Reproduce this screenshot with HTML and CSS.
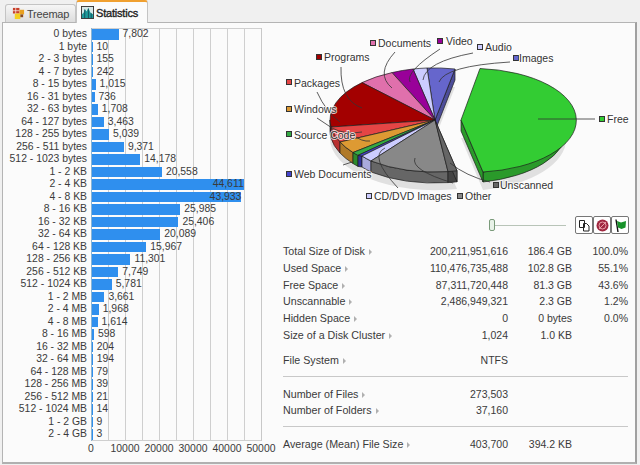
FILE: index.html
```html
<!DOCTYPE html>
<html lang="en">
<head>
    <meta charset="UTF-8">
    <title>Disk Statistics</title>
    <link rel="stylesheet" href="styles.css">
</head>
<body>
    <!-- Tabs -->
    <div class="tabs">
        <div class="tab">
            <svg class="tab-icon" viewBox="0 0 14 14">
                <rect x="1" y="1" width="7" height="6" fill="#c8402a"/>
                <rect x="8" y="3" width="5" height="5" fill="#e8a020"/>
                <rect x="3" y="7" width="6" height="6" fill="#f4d020"/>
                <rect x="9" y="8" width="3" height="3" fill="#8a4a20"/>
                <path d="M1 4h7M4 1v6" stroke="#fff" stroke-width="0.7"/>
            </svg>
            Treemap
        </div>
        <div class="tab tab-active">
            <svg class="tab-icon" viewBox="0 0 14 14">
                <rect x="0.5" y="0.5" width="13" height="13" fill="#d8e8e8" stroke="#333"/>
                <path d="M1 13V9l2-2 1-4 2 3 2-4 2 5 3 2v4z" fill="#1f9a9a"/>
                <path d="M4 13V4M8 13V3M11 13V8" stroke="#134" stroke-width="0.7"/>
            </svg>
            Statistics
        </div>
    </div>

    <div class="panel">
        <!-- File size histogram -->
        <div class="hist">
            <div class="hist-rows">
                <div class="hist-row"><span class="hist-label">0 bytes</span><div class="hist-track"><div class="hist-bar" style="width:26.5px"></div><span class="hist-value">7,802</span></div></div>
                <div class="hist-row"><span class="hist-label">1 byte</span><div class="hist-track"><div class="hist-bar" style="width:0.5px"></div><span class="hist-value">10</span></div></div>
                <div class="hist-row"><span class="hist-label">2 - 3 bytes</span><div class="hist-track"><div class="hist-bar" style="width:0.5px"></div><span class="hist-value">155</span></div></div>
                <div class="hist-row"><span class="hist-label">4 - 7 bytes</span><div class="hist-track"><div class="hist-bar" style="width:0.8px"></div><span class="hist-value">242</span></div></div>
                <div class="hist-row"><span class="hist-label">8 - 15 bytes</span><div class="hist-track"><div class="hist-bar" style="width:3.5px"></div><span class="hist-value">1,015</span></div></div>
                <div class="hist-row"><span class="hist-label">16 - 31 bytes</span><div class="hist-track"><div class="hist-bar" style="width:2.5px"></div><span class="hist-value">736</span></div></div>
                <div class="hist-row"><span class="hist-label">32 - 63 bytes</span><div class="hist-track"><div class="hist-bar" style="width:5.8px"></div><span class="hist-value">1,708</span></div></div>
                <div class="hist-row"><span class="hist-label">64 - 127 bytes</span><div class="hist-track"><div class="hist-bar" style="width:11.8px"></div><span class="hist-value">3,463</span></div></div>
                <div class="hist-row"><span class="hist-label">128 - 255 bytes</span><div class="hist-track"><div class="hist-bar" style="width:17.1px"></div><span class="hist-value">5,039</span></div></div>
                <div class="hist-row"><span class="hist-label">256 - 511 bytes</span><div class="hist-track"><div class="hist-bar" style="width:31.9px"></div><span class="hist-value">9,371</span></div></div>
                <div class="hist-row"><span class="hist-label">512 - 1023 bytes</span><div class="hist-track"><div class="hist-bar" style="width:48.2px"></div><span class="hist-value">14,178</span></div></div>
                <div class="hist-row"><span class="hist-label">1 - 2 KB</span><div class="hist-track"><div class="hist-bar" style="width:69.9px"></div><span class="hist-value">20,558</span></div></div>
                <div class="hist-row hist-row-full"><span class="hist-label">2 - 4 KB</span><div class="hist-track"><div class="hist-bar" style="width:151.7px"><span class="hist-value">44,611</span></div></div></div>
                <div class="hist-row hist-row-full"><span class="hist-label">4 - 8 KB</span><div class="hist-track"><div class="hist-bar" style="width:149.4px"><span class="hist-value">43,933</span></div></div></div>
                <div class="hist-row"><span class="hist-label">8 - 16 KB</span><div class="hist-track"><div class="hist-bar" style="width:88.3px"></div><span class="hist-value">25,985</span></div></div>
                <div class="hist-row"><span class="hist-label">16 - 32 KB</span><div class="hist-track"><div class="hist-bar" style="width:86.4px"></div><span class="hist-value">25,406</span></div></div>
                <div class="hist-row"><span class="hist-label">32 - 64 KB</span><div class="hist-track"><div class="hist-bar" style="width:68.3px"></div><span class="hist-value">20,089</span></div></div>
                <div class="hist-row"><span class="hist-label">64 - 128 KB</span><div class="hist-track"><div class="hist-bar" style="width:54.3px"></div><span class="hist-value">15,967</span></div></div>
                <div class="hist-row"><span class="hist-label">128 - 256 KB</span><div class="hist-track"><div class="hist-bar" style="width:38.4px"></div><span class="hist-value">11,301</span></div></div>
                <div class="hist-row"><span class="hist-label">256 - 512 KB</span><div class="hist-track"><div class="hist-bar" style="width:26.3px"></div><span class="hist-value">7,749</span></div></div>
                <div class="hist-row"><span class="hist-label">512 - 1024 KB</span><div class="hist-track"><div class="hist-bar" style="width:19.7px"></div><span class="hist-value">5,781</span></div></div>
                <div class="hist-row"><span class="hist-label">1 - 2 MB</span><div class="hist-track"><div class="hist-bar" style="width:12.4px"></div><span class="hist-value">3,661</span></div></div>
                <div class="hist-row"><span class="hist-label">2 - 4 MB</span><div class="hist-track"><div class="hist-bar" style="width:6.7px"></div><span class="hist-value">1,968</span></div></div>
                <div class="hist-row"><span class="hist-label">4 - 8 MB</span><div class="hist-track"><div class="hist-bar" style="width:5.5px"></div><span class="hist-value">1,614</span></div></div>
                <div class="hist-row"><span class="hist-label">8 - 16 MB</span><div class="hist-track"><div class="hist-bar" style="width:2px"></div><span class="hist-value">598</span></div></div>
                <div class="hist-row"><span class="hist-label">16 - 32 MB</span><div class="hist-track"><div class="hist-bar" style="width:0.7px"></div><span class="hist-value">204</span></div></div>
                <div class="hist-row"><span class="hist-label">32 - 64 MB</span><div class="hist-track"><div class="hist-bar" style="width:0.7px"></div><span class="hist-value">194</span></div></div>
                <div class="hist-row"><span class="hist-label">64 - 128 MB</span><div class="hist-track"><div class="hist-bar" style="width:0.5px"></div><span class="hist-value">79</span></div></div>
                <div class="hist-row"><span class="hist-label">128 - 256 MB</span><div class="hist-track"><div class="hist-bar" style="width:0.5px"></div><span class="hist-value">39</span></div></div>
                <div class="hist-row"><span class="hist-label">256 - 512 MB</span><div class="hist-track"><div class="hist-bar" style="width:0.5px"></div><span class="hist-value">21</span></div></div>
                <div class="hist-row"><span class="hist-label">512 - 1024 MB</span><div class="hist-track"><div class="hist-bar" style="width:0.5px"></div><span class="hist-value">14</span></div></div>
                <div class="hist-row"><span class="hist-label">1 - 2 GB</span><div class="hist-track"><div class="hist-bar" style="width:0.5px"></div><span class="hist-value">9</span></div></div>
                <div class="hist-row"><span class="hist-label">2 - 4 GB</span><div class="hist-track"><div class="hist-bar" style="width:0.5px"></div><span class="hist-value">3</span></div></div>
            </div>
            <div class="hist-axis">
                <span>0</span><span>10000</span><span>20000</span><span>30000</span><span>40000</span><span>50000</span>
            </div>
        </div>

        <div class="side">
            <!-- Pie chart: coordinates are page pixels, shifted by the viewBox -->
            <svg class="pie" viewBox="280 24 355 186">
                <g class="pie-shadow">
                    <path d="M435 138L330 138A105 52 0 0 0 457 189Z"/>
                    <path d="M435 138L427 86 455 87Z"/>
                    <path d="M461 138L566 138A105 52 0 0 1 483 190Z"/>
                </g>

                <!-- Side faces -->
                <g class="pie-edge">
                    <path fill="#7a0000" d="M330 120A105 52 0 0 0 331 127v11A105 52 0 0 1 330 131Z"/>
                    <path fill="#b83030" d="M331 127A105 52 0 0 0 340 142v11A105 52 0 0 1 331 138Z"/>
                    <path fill="#b07a28" d="M340 142A105 52 0 0 0 353 152.5v11A105 52 0 0 1 340 153Z"/>
                    <path fill="#2c8a2c" d="M353 152.5A105 52 0 0 0 358 155.4v11A105 52 0 0 1 353 163.5Z"/>
                    <path fill="#33339a" d="M358 155.4A105 52 0 0 0 362 156v11A105 52 0 0 1 358 166.4Z"/>
                    <path fill="#aaaadd" d="M362 156A105 52 0 0 0 371 161v11A105 52 0 0 1 362 167Z"/>
                    <path fill="#666" d="M371 161A105 52 0 0 0 448 171.6v11A105 52 0 0 1 371 172Z"/>
                    <path fill="#444" d="M448 171.6A105 52 0 0 0 457 170.8v11A105 52 0 0 1 448 182.6Z"/>
                    <path fill="#4d4d99" d="M435 120L455 69v11L435 131Z"/>
                    <path fill="#555" d="M435 120L457 170.8v11L435 131Z"/>
                </g>

                <!-- Top faces, anticlockwise from Images -->
                <g class="pie-edge">
                    <path fill="#6666cc" d="M435 120L455 69A105 52 0 0 0 427 68Z"/>
                    <path fill="#ccccff" d="M435 120L427 68A105 52 0 0 0 413 69Z"/>
                    <path fill="#990099" d="M435 120L413 69A105 52 0 0 0 392 72.6Z"/>
                    <path fill="#e070ac" d="M435 120L392 72.6A105 52 0 0 0 362 82.6Z"/>
                    <path fill="#a30000" d="M435 120L362 82.6A105 52 0 0 0 331 127Z"/>
                    <path fill="#e54545" d="M435 120L331 127A105 52 0 0 0 340 142Z"/>
                    <path fill="#dd9a33" d="M435 120L340 142A105 52 0 0 0 353 152.5Z"/>
                    <path fill="#33aa44" d="M435 120L353 152.5A105 52 0 0 0 358 155.4Z"/>
                    <path fill="#4444cc" d="M435 120L358 155.4A105 52 0 0 0 362 156Z"/>
                    <path fill="#ccccff" d="M435 120L362 156A105 52 0 0 0 371 161Z"/>
                    <path fill="#888" d="M435 120L371 161A105 52 0 0 0 448 171.6Z"/>
                    <path fill="#666" d="M435 120L448 171.6A105 52 0 0 0 457 170.8Z"/>
                </g>

                <!-- Free slice is pulled out to the right -->
                <g class="pie-edge">
                    <path fill="#2a9a2a" d="M566 120A105 52 0 0 1 483 172v10A105 52 0 0 0 566 130Z"/>
                    <path fill="#2a9a2a" d="M461 120L483 172v10L461 131Z"/>
                    <path fill="#33cc33" d="M461 120L480 68.5A105 52 0 0 1 483 172Z"/>
                </g>

                <!-- Leader lines -->
                <g class="pie-leader">
                    <path d="M538 119H595"/>
                    <path d="M450 163Q466 176 490 182"/>
                    <path d="M415 158Q410 170 453 183"/>
                    <path d="M385 148Q368 156 398 188"/>
                    <path d="M343 165L352 162"/>
                    <path d="M353 135Q362 142 370 141"/>
                    <path d="M317 118L332 128Q345 135 362 132"/>
                    <path d="M317 92Q326 112 340 122"/>
                    <path d="M341 67Q340 100 362 108"/>
                    <path d="M395 52Q375 74 392 88"/>
                    <path d="M440 49Q405 72 410 82"/>
                    <path d="M473 53Q425 62 423 80"/>
                    <path d="M510 62Q445 66 439 82"/>
                </g>

                <!-- Legend -->
                <g class="pie-key">
                    <rect x="370.5" y="40.5" width="5" height="5" fill="#e070ac"/>
                    <rect x="437.5" y="38.5" width="5" height="5" fill="#990099"/>
                    <rect x="477.5" y="44.5" width="5" height="5" fill="#ccccff"/>
                    <rect x="513.5" y="55.5" width="5" height="5" fill="#6666cc"/>
                    <rect x="316.5" y="54.5" width="5" height="5" fill="#a30000"/>
                    <rect x="286.5" y="79.5" width="5" height="5" fill="#e54545"/>
                    <rect x="286.5" y="106.5" width="5" height="5" fill="#dd9a33"/>
                    <rect x="286.5" y="131.5" width="5" height="5" fill="#33aa44"/>
                    <rect x="286.5" y="171.5" width="5" height="5" fill="#4444cc"/>
                    <rect x="366.5" y="193.5" width="5" height="5" fill="#ccccff"/>
                    <rect x="457.5" y="193.5" width="5" height="5" fill="#888"/>
                    <rect x="493.5" y="182.5" width="5" height="5" fill="#666"/>
                    <rect x="599.5" y="116.5" width="5" height="5" fill="#33cc33"/>
                </g>
                <g class="pie-text">
                    <text x="378" y="47">Documents</text>
                    <text x="446" y="45">Video</text>
                    <text x="485" y="51">Audio</text>
                    <text x="519" y="62">Images</text>
                    <text x="324" y="61">Programs</text>
                    <text x="294" y="87">Packages</text>
                    <text x="294" y="113">Windows</text>
                    <text x="294" y="139">Source Code</text>
                    <text x="294" y="178">Web Documents</text>
                    <text x="374" y="200">CD/DVD Images</text>
                    <text x="465" y="200">Other</text>
                    <text x="500" y="189">Unscanned</text>
                    <text x="607" y="123">Free</text>
                </g>
            </svg>

            <!-- Zoom slider and buttons -->
            <div class="controls">
                <div class="slider"><span class="slider-knob"></span></div>
                <div class="tool-btns">
                    <button class="tool-btn">
                        <svg viewBox="0 0 15 15"><path d="M2.500 2.500h5v7h-5zM6.500 5.500h3l2.500 2.500v5h-5.500z" fill="#fff" stroke="#222"/></svg>
                    </button>
                    <button class="tool-btn">
                        <svg viewBox="0 0 15 15"><circle cx="7.500" cy="7.500" r="6" fill="#a02840"/><circle cx="7.500" cy="7.500" r="3.500" fill="none" stroke="#e8a0a8"/><path d="M4 11L11 4" stroke="#e8a0a8"/></svg>
                    </button>
                    <button class="tool-btn">
                        <svg viewBox="0 0 15 15"><path d="M3 1.500L5 14" stroke="#111" stroke-width="1.400"/><path d="M4 3l4 1.500 5-1.500-.5 6.500-4 1.500-3.500-1.500z" fill="#18922a"/></svg>
                    </button>
                </div>
            </div>

            <!-- Disk numbers -->
            <div class="stat-group">
                <div class="stat-row"><span class="stat-label">Total Size of Disk</span><span class="stat-num">200,211,951,616</span><span class="stat-num">186.4 GB</span><span class="stat-num">100.0%</span></div>
                <div class="stat-row"><span class="stat-label">Used Space</span><span class="stat-num">110,476,735,488</span><span class="stat-num">102.8 GB</span><span class="stat-num">55.1%</span></div>
                <div class="stat-row"><span class="stat-label">Free Space</span><span class="stat-num">87,311,720,448</span><span class="stat-num">81.3 GB</span><span class="stat-num">43.6%</span></div>
                <div class="stat-row"><span class="stat-label">Unscannable</span><span class="stat-num">2,486,949,321</span><span class="stat-num">2.3 GB</span><span class="stat-num">1.2%</span></div>
                <div class="stat-row"><span class="stat-label">Hidden Space</span><span class="stat-num">0</span><span class="stat-num">0 bytes</span><span class="stat-num">0.0%</span></div>
                <div class="stat-row"><span class="stat-label">Size of a Disk Cluster</span><span class="stat-num">1,024</span><span class="stat-num">1.0 KB</span></div>
                <div class="stat-row stat-row-gap"><span class="stat-label">File System</span><span class="stat-num">NTFS</span></div>
            </div>
            <div class="stat-group">
                <div class="stat-row"><span class="stat-label">Number of Files</span><span class="stat-num">273,503</span></div>
                <div class="stat-row"><span class="stat-label">Number of Folders</span><span class="stat-num">37,160</span></div>
            </div>
            <div class="stat-group">
                <div class="stat-row"><span class="stat-label">Average (Mean) File Size</span><span class="stat-num">403,700</span><span class="stat-num">394.2 KB</span></div>
            </div>
        </div>
    </div>
</body>
</html>
```

FILE: styles.css
```css
* {
    box-sizing: border-box;
}

html, body {
    height: 100%;
    overflow: hidden;
}

body {
    margin: 0;
    background: #f0f0f0;
    color: #3a3a3a;
    font-family: "Liberation Sans", Arial, sans-serif;
    font-size: 10.5px;
}

/* Tabs */
.tabs {
    display: flex;
    height: 22px;
    padding-left: 5px;
    align-items: flex-end;
}

.tab {
    display: flex;
    align-items: center;
    gap: 2px;
    width: 71px;
    height: 18px;
    padding-left: 6px;
    border: 1px solid #c4c4c4;
    border-bottom: none;
    border-radius: 3px 3px 0 0;
    background: linear-gradient(#f6f6f6, #dcdcdc);
    color: #444;
    font-size: 11px;
    letter-spacing: -0.2px;
}

.tab-active {
    position: relative;
    width: 72px;
    height: 23px;
    margin-bottom: -1px;
    padding-left: 4px;
    border-top: 2px solid #f0a030;
    background: #fbfbfb;
    color: #222;
    font-size: 11px;
    -webkit-text-stroke: 0.35px #222;
}

.tab-icon {
    width: 13px;
    height: 13px;
    flex: none;
}

/* Main panel */
.panel {
    display: flex;
    height: 442px;
    width: 635px;
    margin-left: 2px;
    border: 1px solid #b4b4b4;
    border-right: 2px solid #a0a0a0;
    border-bottom: 2px solid #b0b0b0;
    background: #fbfbfb;
}

/* Histogram */
.hist {
    width: 277px;
    flex: none;
    padding-top: 5px;
    font-size: 10.4px;
}

.hist-rows {
    display: grid;
    grid-auto-rows: 12.5px;
}

.hist-row {
    display: flex;
    gap: 4px;
    line-height: 12.5px;
}

.hist-label {
    width: 84px;
    text-align: right;
    white-space: nowrap;
    flex: none;
}

.hist-track {
    display: flex;
    align-items: center;
    gap: 4px;
    width: 171px;
    border-left: 1px solid #8ab4d4;
    border-right: 1px solid #c8c8c8;
    background: repeating-linear-gradient(to right, transparent 0, transparent 16px, #cfcfcf 16px, #cfcfcf 17px);
}

.hist-row:first-child .hist-track {
    box-shadow: inset 0 1px 0 #cfcfcf;
}

.hist-row:last-child .hist-track {
    box-shadow: inset 0 -1px 0 #cfcfcf;
}

.hist-bar {
    height: 10.5px;
    background: #2f8fee;
    flex: none;
}

.hist-row-full .hist-bar {
    text-align: right;
    line-height: 10.5px;
}

.hist-value {
    white-space: nowrap;
}

.hist-axis {
    display: flex;
    margin-left: 71px;
    margin-top: 2px;
}

.hist-axis span {
    width: 34px;
    text-align: center;
}

/* Pie chart */
.side {
    flex: 1;
    min-width: 0;
    padding-top: 1px;
}

.pie {
    display: block;
    width: 355px;
    height: 186px;
}

.pie-shadow path {
    fill: #e0e0e0;
}

.pie-edge path {
    stroke: #1c1c1c;
    stroke-width: 0.7;
    stroke-linejoin: round;
}

.pie-leader path {
    fill: none;
    stroke: #333;
    stroke-width: 0.8;
}

.pie-key rect {
    stroke: #333;
    stroke-width: 1;
}

.pie-text text {
    fill: #333;
    font-size: 10.5px;
    stroke: rgba(255, 255, 255, 0.75);
    stroke-width: 2px;
    paint-order: stroke;
}

/* Slider row */
.controls {
    display: flex;
    align-items: center;
    justify-content: flex-end;
    gap: 9px;
    height: 18px;
    margin-top: 6px;
    padding-right: 6px;
}

.slider {
    position: relative;
    width: 77px;
    height: 1px;
    background: #b8c4b8;
}

.slider-knob {
    position: absolute;
    left: 0;
    top: -6px;
    width: 6px;
    height: 12px;
    border: 1px solid #7a9a7a;
    border-radius: 2px;
    background: #e8f2e8;
}

.tool-btns {
    display: flex;
}

.tool-btn {
    width: 18px;
    height: 18px;
    padding: 0;
    border: 1px solid #777;
    border-radius: 2px;
    background: #fff;
}

.tool-btn svg {
    display: block;
    width: 15px;
    height: 15px;
    margin: 0 auto;
}

/* Number table */
.stat-group {
    margin: 0 7px 0 3px;
    padding: 9px 0 7px;
    border-bottom: 1px solid #c8c8c8;
}

.stat-group:last-child {
    border-bottom: none;
}

.stat-row {
    display: grid;
    grid-template-columns: 140px 85px 64px 56px;
    height: 16.8px;
    line-height: 16.8px;
}

.stat-row-gap {
    margin-top: 8px;
}

.stat-label {
    font-size: 10.7px;
    white-space: nowrap;
}

.stat-label::after {
    content: "";
    display: inline-block;
    margin-left: 4px;
    border-left: 3px solid #b0b0b0;
    border-top: 3px solid transparent;
    border-bottom: 3px solid transparent;
}

.stat-num {
    text-align: right;
    white-space: nowrap;
}
```
